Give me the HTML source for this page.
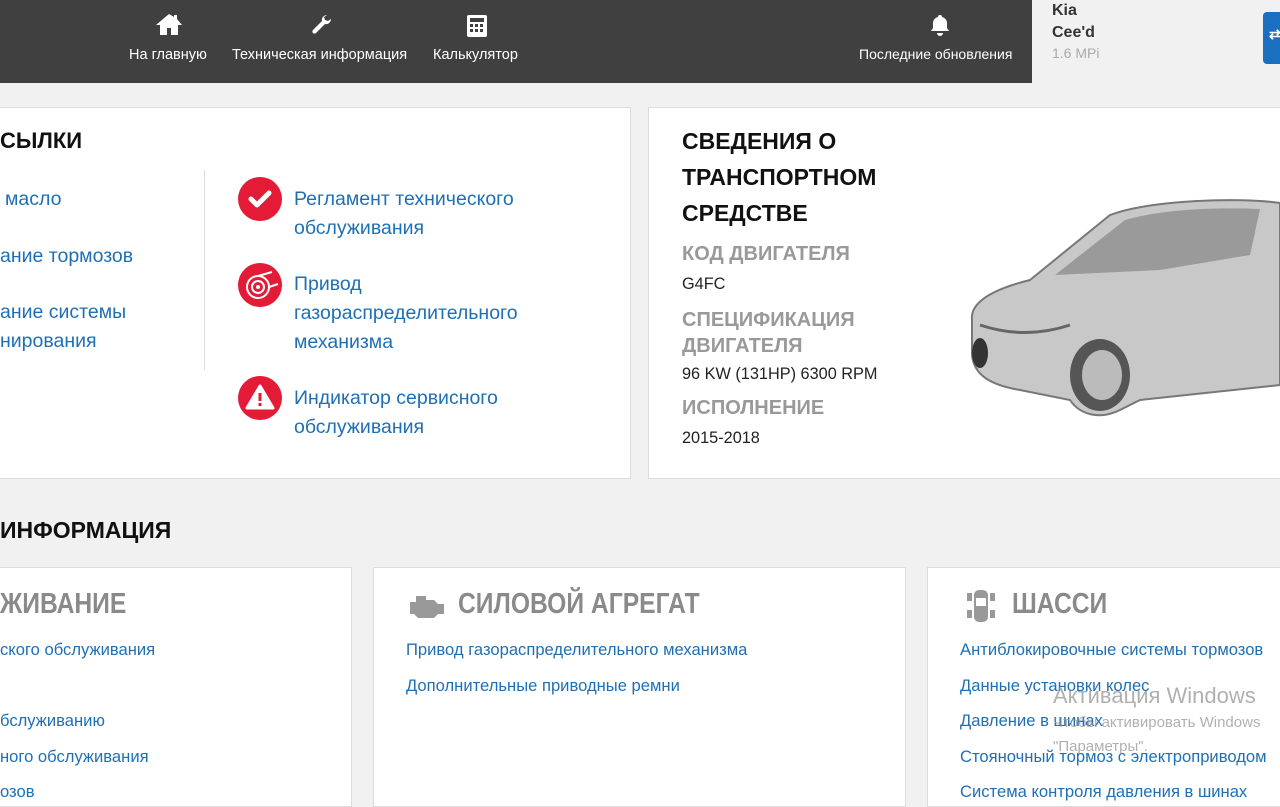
<!DOCTYPE html>
<html><head><meta charset="utf-8"><style>
*{box-sizing:border-box;margin:0;padding:0}
body{width:1280px;height:800px;overflow:hidden;background:#f1f1f1;font-family:"Liberation Sans",sans-serif;position:relative}
.abs{position:absolute}
.nav{left:0;top:0;width:1032px;height:83px;background:#404040}
.ni{position:absolute;color:#fff;font-size:14.5px;text-align:center;top:47px;white-space:nowrap}
.card{position:absolute;background:#fff;border:1px solid #dcdcdc}
.h{font-weight:bold;color:#111;font-size:23px}
.lab{color:#999;font-weight:bold;font-size:20px}
.val{font-size:16.3px;color:#222}
.ch{position:absolute;top:588px;font-weight:bold;font-size:29px;color:#8a8a8a;transform:scaleX(.85);transform-origin:left;white-space:nowrap}
.bl{position:absolute;font-size:16.6px;color:#1f6fb5;white-space:nowrap}
.ql{position:absolute;font-size:19.5px;color:#1f6fb5;line-height:29px;white-space:nowrap}
.ic{position:absolute;width:44px;height:44px;border-radius:50%;background:#e31b37}
</style></head><body>
<div class="abs nav"></div>
<svg class="abs" style="left:155px;top:12px" width="28" height="24" viewBox="0 0 28 24"><path d="M14 2L1 13h4v10h7v-7h4v7h7V13h4L22 7V3h-3v2z" fill="#fff"/></svg>
<div class="ni" style="left:129px">На главную</div>
<svg class="abs" style="left:310px;top:13px" width="24" height="24" viewBox="0 0 24 24"><path d="M17 2a5 5 0 00-5 6L3 17a2 2 0 003 3l9-9a5 5 0 006-5l-3 2-3-1-1-3 3-2z" fill="#fff"/></svg>
<div class="ni" style="left:232px">Техническая информация</div>
<svg class="abs" style="left:466px;top:14px" width="22" height="24" viewBox="0 0 22 24"><rect x="1" y="1" width="20" height="22" rx="2" fill="#fff"/><rect x="4" y="4" width="14" height="4" fill="#404040"/><g fill="#404040"><rect x="4" y="10" width="3" height="3"/><rect x="9" y="10" width="3" height="3"/><rect x="14" y="10" width="3" height="3"/><rect x="4" y="15" width="3" height="3"/><rect x="9" y="15" width="3" height="3"/><rect x="14" y="15" width="3" height="3"/></g></svg>
<div class="ni" style="left:433px">Калькулятор</div>
<svg class="abs" style="left:928px;top:13px" width="24" height="24" viewBox="0 0 24 24"><path d="M12 2a2 2 0 012 2 6 6 0 015 6v5l2 3H3l2-3v-5a6 6 0 015-6 2 2 0 012-2zM9 20h6a3 3 0 01-6 0z" fill="#fff"/></svg>
<div class="ni" style="left:859px;top:46px;font-size:14px">Последние обновления</div>
<div class="abs" style="left:1052px;top:0px;font-weight:bold;font-size:16px;color:#333;line-height:22px">Kia<br>Cee'd</div>
<div class="abs" style="left:1052px;top:45px;font-size:14px;color:#aaa">1.6 MPi</div>
<div class="abs" style="left:1263px;top:12px;width:30px;height:52px;background:#1a6fc0;border-radius:4px"></div>
<div class="abs" style="left:1269px;top:26px;color:#fff;font-size:14px;font-weight:bold">⇄</div>

<div class="card" style="left:-2px;top:107px;width:633px;height:372px"></div>
<div class="abs h" style="left:0;top:128px;font-size:22px">СЫЛКИ</div>
<div class="ql" style="left:5px;top:185px">масло</div>
<div class="ql" style="left:0;top:242px">ание тормозов</div>
<div class="ql" style="left:0;top:298px">ание системы<br>нирования</div>
<div class="abs" style="left:204px;top:170px;width:1px;height:200px;background:#ddd"></div>
<div class="ic" style="left:238px;top:177px"></div>
<svg class="abs" style="left:238px;top:177px" width="44" height="44"><path d="M13 22l6 6 12-12" stroke="#fff" stroke-width="5" fill="none" stroke-linecap="round" stroke-linejoin="round"/></svg>
<div class="ic" style="left:238px;top:263px"></div>
<svg class="abs" style="left:238px;top:263px" width="44" height="44"><circle cx="20" cy="24" r="11" fill="none" stroke="#fff" stroke-width="2"/><circle cx="20" cy="24" r="6" fill="none" stroke="#fff" stroke-width="2"/><circle cx="20" cy="24" r="2" fill="#fff"/><path d="M20 13L34 9M31 24l9 -3" stroke="#fff" stroke-width="2"/></svg>
<div class="ic" style="left:238px;top:376px"></div>
<svg class="abs" style="left:238px;top:376px" width="44" height="44"><path d="M22 10L35 32H9z" fill="#fff" stroke="#fff" stroke-width="3" stroke-linejoin="round"/><rect x="20.5" y="17" width="3" height="8" fill="#e31b37"/><rect x="20.5" y="27" width="3" height="3" fill="#e31b37"/></svg>
<div class="ql" style="left:294px;top:185px">Регламент технического<br>обслуживания</div>
<div class="ql" style="left:294px;top:270px">Привод<br>газораспределительного<br>механизма</div>
<div class="ql" style="left:294px;top:384px">Индикатор сервисного<br>обслуживания</div>

<div class="card" style="left:648px;top:107px;width:640px;height:372px"></div>
<div class="abs h" style="left:682px;top:123px;line-height:36px">СВЕДЕНИЯ О<br>ТРАНСПОРТНОМ<br>СРЕДСТВЕ</div>
<div class="abs lab" style="left:682px;top:243px">КОД ДВИГАТЕЛЯ</div>
<div class="abs val" style="left:682px;top:275px">G4FC</div>
<div class="abs lab" style="left:682px;top:307px;line-height:26px">СПЕЦИФИКАЦИЯ<br>ДВИГАТЕЛЯ</div>
<div class="abs val" style="left:682px;top:365px">96 KW (131HP) 6300 RPM</div>
<div class="abs lab" style="left:682px;top:397px">ИСПОЛНЕНИЕ</div>
<div class="abs val" style="left:682px;top:429px">2015-2018</div>
<svg class="abs" style="left:960px;top:185px" width="320" height="245" viewBox="0 0 320 245">
<path d="M12 135C10 118 30 105 70 95L150 30C190 15 280 12 320 18V200L180 215L160 225C140 235 120 230 110 215L60 205C30 200 14 190 12 170z" fill="#c8c8c8" stroke="#777" stroke-width="2"/>
<path d="M95 90L165 35C200 25 250 22 300 24L290 70L200 85z" fill="#9a9a9a"/>
<path d="M20 140C50 150 80 150 110 140" stroke="#666" stroke-width="3" fill="none"/>
<ellipse cx="140" cy="190" rx="30" ry="36" fill="#555"/><ellipse cx="142" cy="190" rx="20" ry="25" fill="#bbb"/>
<ellipse cx="20" cy="168" rx="8" ry="15" fill="#333"/>
</svg>

<div class="abs h" style="left:0;top:517px">ИНФОРМАЦИЯ</div>
<div class="card" style="left:-2px;top:567px;width:354px;height:240px"></div>
<div class="card" style="left:373px;top:567px;width:533px;height:240px"></div>
<div class="card" style="left:927px;top:567px;width:360px;height:240px"></div>
<div class="ch" style="left:0">ЖИВАНИЕ</div>
<div class="bl" style="left:0;top:640px">ского обслуживания</div>
<div class="bl" style="left:0;top:711px">бслуживанию</div>
<div class="bl" style="left:0;top:747px">ного обслуживания</div>
<div class="bl" style="left:0;top:782px">озов</div>
<svg class="abs" style="left:408px;top:594px" width="40" height="26"><path d="M8 2h10v4h8l4 4h6v10h-6l-4 4H10l-4-4H2V8h6z" fill="#999"/></svg>
<div class="ch" style="left:458px">СИЛОВОЙ АГРЕГАТ</div>
<div class="bl" style="left:406px;top:640px">Привод газораспределительного механизма</div>
<div class="bl" style="left:406px;top:676px">Дополнительные приводные ремни</div>
<svg class="abs" style="left:965px;top:588px" width="32" height="36"><rect x="9" y="2" width="14" height="32" rx="5" fill="#999"/><rect x="11" y="10" width="10" height="8" fill="#fff"/><g fill="#999"><rect x="2" y="5" width="5" height="8"/><rect x="25" y="5" width="5" height="8"/><rect x="2" y="22" width="5" height="8"/><rect x="25" y="22" width="5" height="8"/></g></svg>
<div class="ch" style="left:1012px">ШАССИ</div>
<div class="bl" style="left:960px;top:640px">Антиблокировочные системы тормозов</div>
<div class="bl" style="left:960px;top:676px">Данные установки колес</div>
<div class="bl" style="left:960px;top:711px">Давление в шинах</div>
<div class="bl" style="left:960px;top:747px">Стояночный тормоз с электроприводом</div>
<div class="bl" style="left:960px;top:782px">Система контроля давления в шинах</div>
<div class="abs" style="left:1053px;top:683px;font-size:22px;color:rgba(150,150,150,.75)">Активация Windows</div>
<div class="abs" style="left:1053px;top:714px;font-size:15px;color:rgba(150,150,150,.75);white-space:nowrap">Чтобы активировать Windows</div>
<div class="abs" style="left:1053px;top:738px;font-size:15px;color:rgba(150,150,150,.75)">"Параметры".</div>
</body></html>
